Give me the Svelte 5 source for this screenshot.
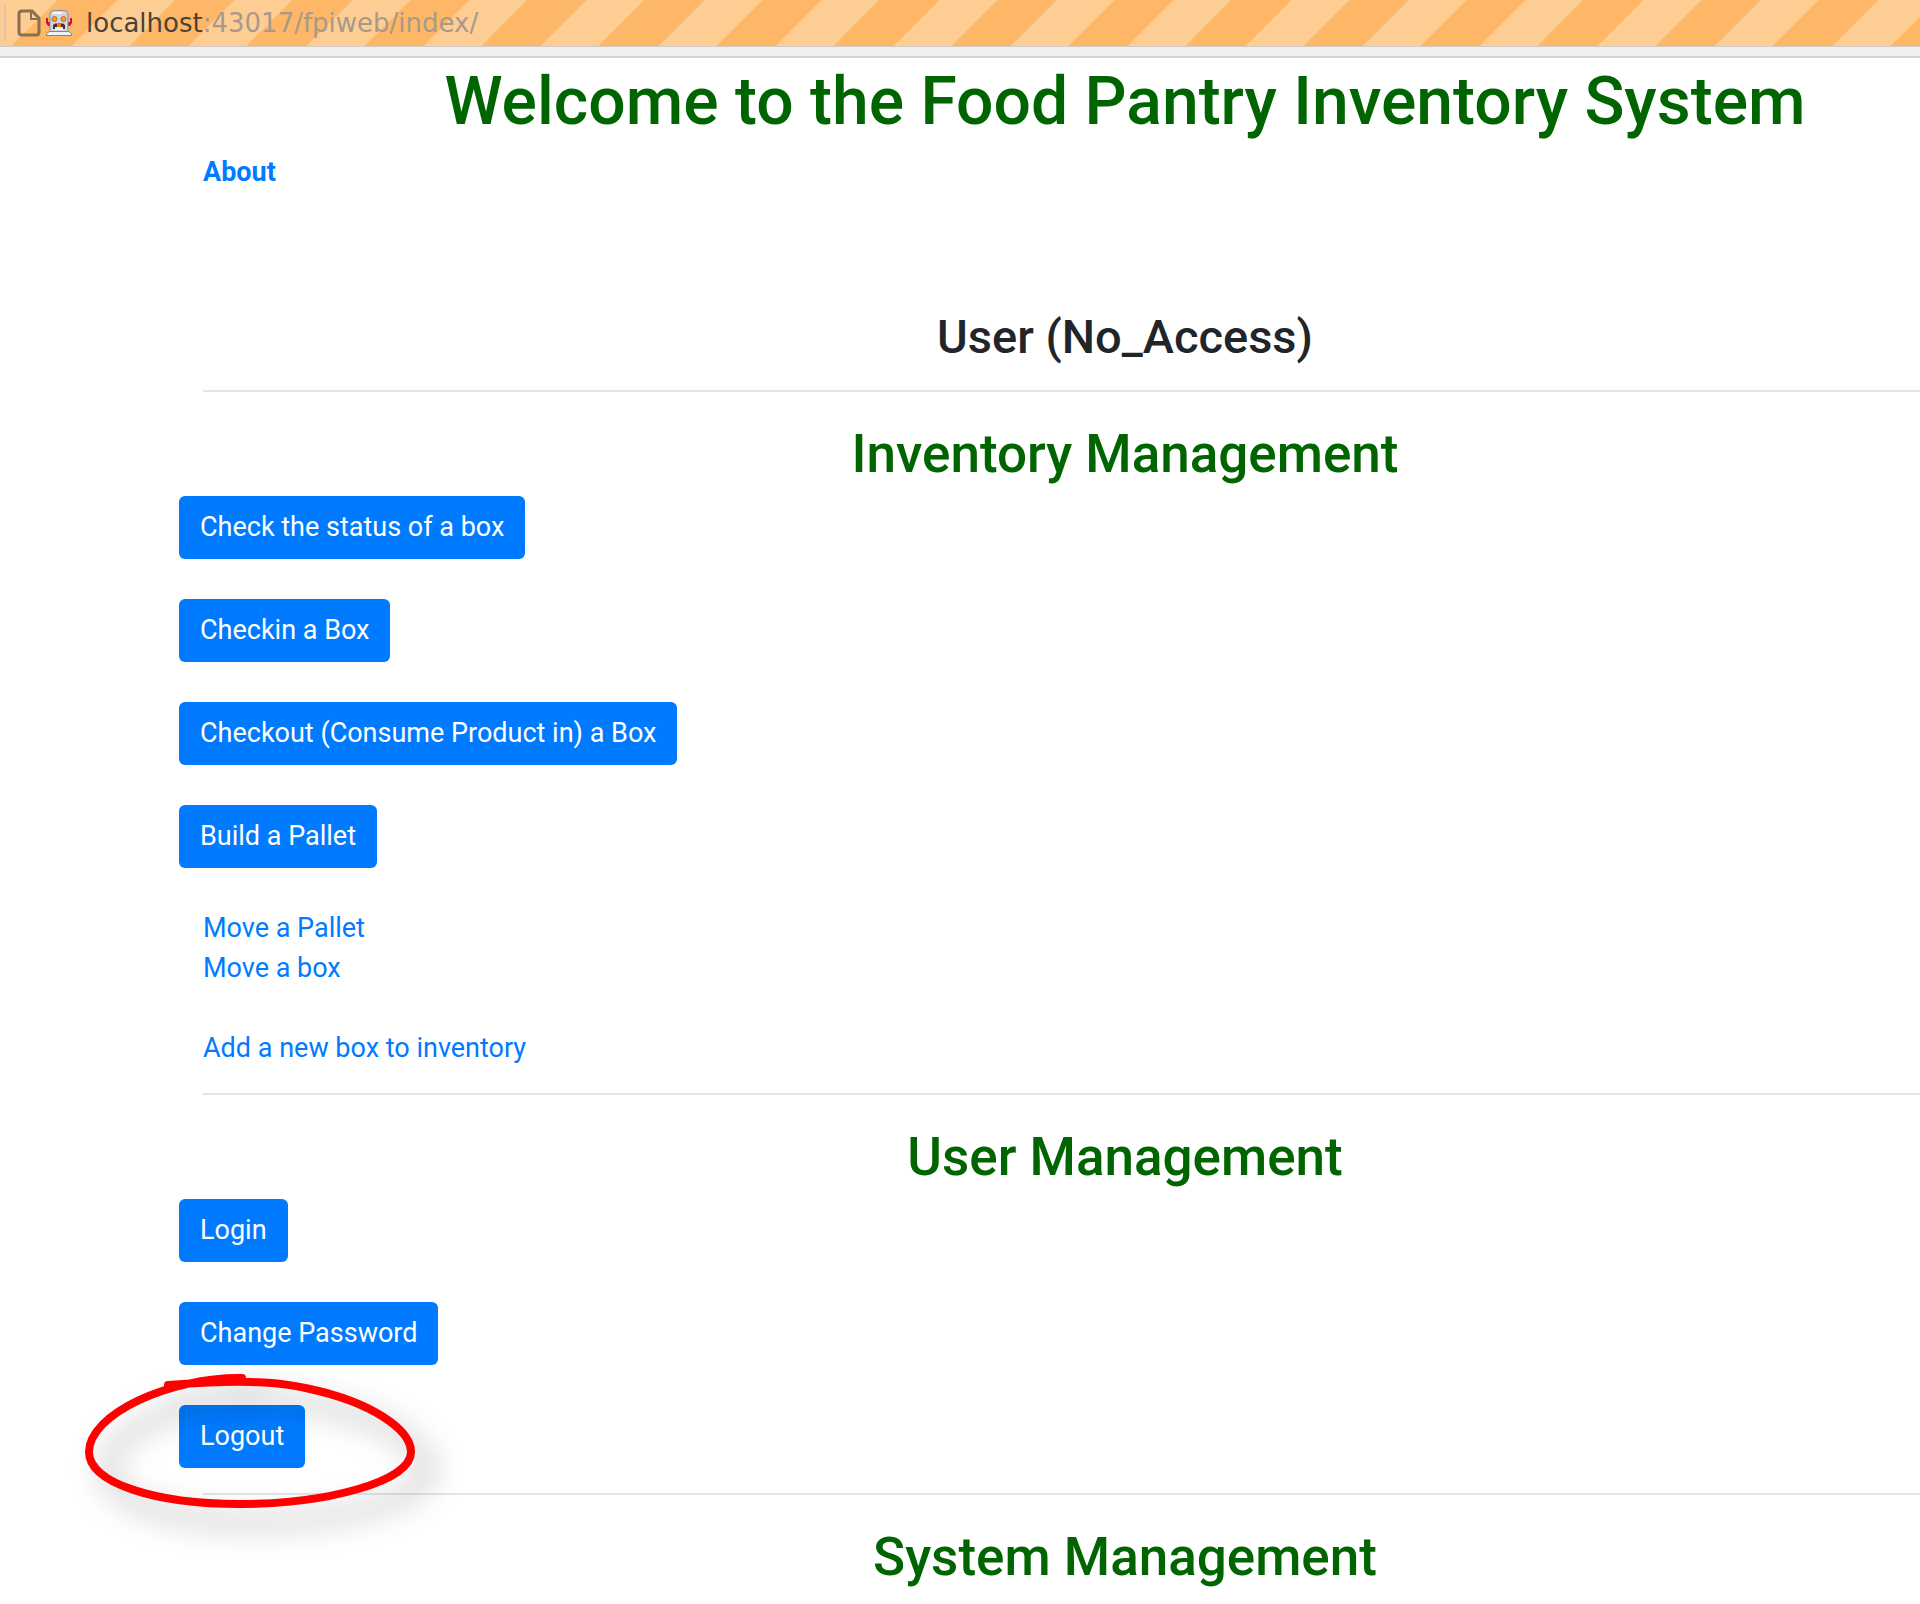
<script>
  const inventoryActions = [
    'Check the status of a box',
    'Checkin a Box',
    'Checkout (Consume Product in) a Box',
    'Build a Pallet',
  ];
</script>

<header class="toolbar">
  <div class="address">
    <span class="divider"></span>
    <svg class="page-icon" viewBox="0 0 24 28" aria-hidden="true">
      <path d="M5 2H15L22 9V23Q22 26 19 26H5Q2 26 2 23V5Q2 2 5 2Z" />
      <path d="M14 3V10H22" stroke-width="2" />
    </svg>
    <svg class="robot" viewBox="0 0 28 28" aria-hidden="true">
      <path d="M1 9H3V13H5V17H3L1 14ZM27 9H25V13H23V17H25L27 14Z" fill="#d0103a" />
      <path d="M5 23V5Q5 1.500 9 1.500H19Q23 1.500 23 5V23Z" fill="#d4d6d9" stroke="#8a8c90" />
      <path d="M8 3H17V5H8Z" fill="#f4f5f6" />
      <path d="M1.500 26.500V24.500L4.500 22.500H23.500L26.500 24.500V26.500Z" fill="#eef2f4" stroke="#7d858c" />
      <circle cx="9.500" cy="10" r="2.500" fill="#f9a01b" stroke="#b06a50" />
      <circle cx="18.500" cy="10" r="2.500" fill="#f9a01b" stroke="#b06a50" />
      <path d="M8 20V16L10 14.500H18L20 16V20H18V18H10V20Z" fill="#3b3735" />
      <path d="M12 15H16V18H12Z" fill="#f47a10" />
      <path d="M10 18.500H18V21H10Z" fill="#f4f4f4" />
    </svg>
    <span class="url"><b>localhost</b>:43017/fpiweb/index/</span>
  </div>
</header>

<main>
  <h1>Welcome to the Food Pantry Inventory System</h1>
  <nav><a class="about" href="#about">About</a></nav>
  <h3>User (No_Access)</h3>
  <hr />

  <section>
    <h2>Inventory Management</h2>
    <div class="actions">
      {#each inventoryActions as label}
        <button type="button">{label}</button>
      {/each}
    </div>
    <div class="links">
      <a href="#move-pallet">Move a Pallet</a>
      <a href="#move-box">Move a box</a>
      <a class="spaced" href="#add-box">Add a new box to inventory</a>
    </div>
  </section>
  <hr />

  <section>
    <h2>User Management</h2>
    <div class="actions">
      <button type="button">Login</button>
      <button type="button">Change Password</button>
      <div class="marked">
        <button type="button">Logout</button>
        <svg class="ring" viewBox="0 0 420 220" aria-hidden="true">
          <path d="M108 44C150 41 205 37 250 48C310 61 351 88 351 111C351 141 265 163 180 163C95 163 29 142 29 111C29 73 110 36 182 37" />
        </svg>
      </div>
    </div>
  </section>
  <hr />

  <section>
    <h2>System Management</h2>
  </section>
</main>

<style>
  :global(body) {
    margin: 0;
    background: #fff;
  }
  .toolbar {
    padding-bottom: 9px;
    background: #f1f0ee;
    border-bottom: 2px solid #d6d2d0;
  }
  .address {
    display: flex;
    align-items: center;
    height: 46px;
    padding-left: 4px;
    border-bottom: 1px solid #cfcac6;
    background: repeating-linear-gradient(135deg, #fecd93 0 41px, #fdb766 41px 83px);
  }
  .divider {
    width: 2px;
    height: 36px;
    margin-right: 11px;
    background: #dcc4ac;
  }
  .page-icon {
    width: 24px;
    height: 28px;
    fill: none;
    stroke: #8a6f50;
    stroke-width: 3;
  }
  .robot {
    width: 28px;
    height: 28px;
    margin: 0 13px 0 4px;
  }
  .url {
    font: 26px/46px "DejaVu Sans", sans-serif;
    color: #a9998a;
  }
  .url b {
    font-weight: 400;
    color: #4b4337;
  }
  main {
    padding: 4px 0 0 203px;
    font: 27px/40px Roboto, sans-serif;
    color: #212529;
  }
  h1, h2, h3 {
    margin: 0 0 10px;
    padding-left: 127px;
    font-weight: 500;
    text-align: center;
  }
  h1 {
    font-size: 66px;
    line-height: 80px;
    color: #006400;
  }
  h2 {
    font-size: 53px;
    line-height: 64px;
    color: #006400;
  }
  h3 {
    margin-top: 117px;
    font-size: 47px;
    line-height: 56px;
  }
  hr {
    height: 0;
    margin: 25px 0 30px;
    border: 0;
    border-top: 2px solid #e5e5e5;
  }
  nav {
    height: 40px;
  }
  a {
    color: #007bff;
    text-decoration: none;
  }
  .about {
    font-weight: 700;
  }
  .actions {
    display: flex;
    flex-direction: column;
    align-items: flex-start;
    gap: 40px;
    margin-left: -24px;
  }
  button {
    display: block;
    padding: 11px 21px 12px;
    border: 0;
    border-radius: 6px;
    background: #007bff;
    color: #fff;
    font: 27px/40px Roboto, sans-serif;
  }
  .links {
    display: flex;
    flex-direction: column;
    align-items: flex-start;
    margin-top: 40px;
  }
  .spaced {
    margin-top: 40px;
  }
  .marked {
    position: relative;
  }
  .ring {
    position: absolute;
    left: -119px;
    top: -64px;
    width: 420px;
    height: 220px;
    overflow: visible;
    pointer-events: none;
    fill: none;
    stroke: #f00;
    stroke-width: 8;
    stroke-linecap: round;
    filter: drop-shadow(17px 18px 15px rgba(0, 0, 0, 0.35));
  }
</style>
